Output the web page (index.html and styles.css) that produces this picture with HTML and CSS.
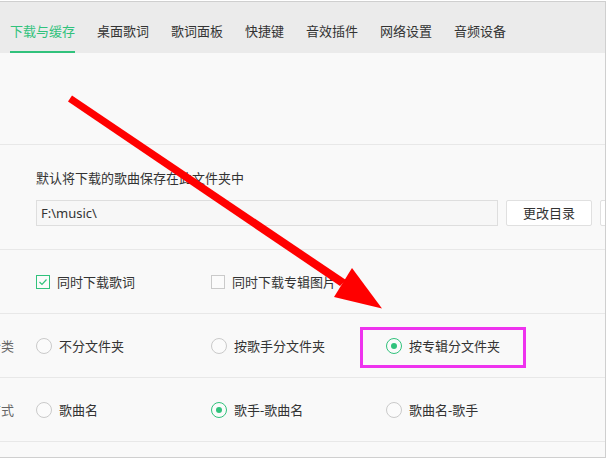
FILE: index.html
```html
<!DOCTYPE html>
<html>
<head>
<meta charset="utf-8">
<title>设置</title>
<link rel="stylesheet" href="styles.css">
</head>
<body>
<div class="window">
    <div class="tabs">
        <div class="tab active">下载与缓存</div>
        <div class="tab">桌面歌词</div>
        <div class="tab">歌词面板</div>
        <div class="tab">快捷键</div>
        <div class="tab">音效插件</div>
        <div class="tab">网络设置</div>
        <div class="tab">音频设备</div>
    </div>
    <div class="panel">
        <div class="section blank"></div>

        <div class="section dir">
            <div class="label"></div>
            <div class="dir-body">
                <div class="hint">默认将下载的歌曲保存在此文件夹中</div>
                <div class="dir-line">
                    <div class="path">F:\music\</div>
                    <div class="btn">更改目录</div>
                    <div class="btn">打开目录</div>
                </div>
            </div>
        </div>

        <div class="section row">
            <div class="label"></div>
            <div class="opt">
                <span class="check on">
                    <svg width="12" height="12" viewBox="0 0 12 12"><polyline points="2.5,6 5,8.5 9.5,3.5" fill="none" stroke="#31c27c" stroke-width="1.2"/></svg>
                </span>
                同时下载歌词
            </div>
            <div class="opt"><span class="check"></span>同时下载专辑图片</div>
        </div>

        <div class="section row">
            <div class="label"><span>文件智能分类</span></div>
            <div class="opt"><span class="radio"></span>不分文件夹</div>
            <div class="opt"><span class="radio"></span>按歌手分文件夹</div>
            <div class="opt"><span class="radio on"></span>按专辑分文件夹</div>
        </div>

        <div class="section row">
            <div class="label"><span>文件命名方式</span></div>
            <div class="opt"><span class="radio"></span>歌曲名</div>
            <div class="opt"><span class="radio on"></span>歌手-歌曲名</div>
            <div class="opt"><span class="radio"></span>歌曲名-歌手</div>
        </div>
    </div>
</div>

<svg class="annot" width="608" height="458" viewBox="0 0 608 458">
    <polygon points="72,95.6 68,101.4 340,286 346,280" fill="#ff0000"/>
    <polygon points="352,268 334,297 382,308.5" fill="#ff0000"/>
    <rect x="361.5" y="328.5" width="163" height="38" fill="none" stroke="#ee33ee" stroke-width="3"/>
</svg>
</body>
</html>
```

FILE: styles.css
```css
body {
    margin: 0;
    padding: 1px 2px 0 0;
    background: #fff;
    font-family: "Noto Sans", "Noto Sans CJK SC", sans-serif;
    font-size: 13px;
    color: #333;
}

.window {
    width: 605px;
    height: 455px;
    border-top: 1px solid #cfcfcf;
    border-right: 1px solid #cfcfcf;
    border-bottom: 1px solid #cfcfcf;
    background: #f9f9f9;
    overflow: hidden;
}

.tabs {
    display: flex;
    gap: 22px;
    height: 51px;
    padding-left: 10px;
    background: #ebebeb;
}

.tab {
    box-sizing: border-box;
    height: 51px;
    padding-top: 20px;
    line-height: 18px;
    white-space: nowrap;
    border-bottom: 2px solid transparent;
}

.tab.active {
    color: #31c27c;
    border-bottom-color: #31c27c;
}

.section {
    border-bottom: 1px solid #e8e8e8;
}

.blank {
    height: 91px;
}

.label {
    flex: none;
    display: flex;
    justify-content: flex-end;
    width: 14px;
    margin-right: 22px;
    overflow: hidden;
    white-space: nowrap;
    color: #666;
}

.dir {
    display: flex;
    height: 104px;
}

.dir-body {
    padding-top: 24px;
}

.hint {
    line-height: 18px;
    margin-bottom: 13px;
}

.dir-line {
    display: flex;
    gap: 8px;
}

.path {
    box-sizing: border-box;
    width: 462px;
    height: 26px;
    line-height: 24px;
    padding-left: 4px;
    border: 1px solid #dedede;
    background: #f7f7f7;
}

.btn {
    flex: none;
    box-sizing: border-box;
    width: 86px;
    height: 26px;
    line-height: 24px;
    text-align: center;
    background: #fff;
    border: 1px solid #e0e0e0;
    border-radius: 2px;
}

.row {
    display: flex;
    align-items: center;
    height: 63px;
}

.opt {
    display: flex;
    align-items: center;
    width: 175px;
    white-space: nowrap;
    line-height: 18px;
}

.radio {
    box-sizing: border-box;
    width: 16px;
    height: 16px;
    margin-right: 7px;
    border: 1px solid #cacaca;
    border-radius: 50%;
    background: #fbfbfb;
    display: flex;
    align-items: center;
    justify-content: center;
}

.radio.on {
    border-color: #31c27c;
}

.radio.on::after {
    content: "";
    width: 6px;
    height: 6px;
    border-radius: 50%;
    background: #31c27c;
}

.check {
    box-sizing: border-box;
    width: 14px;
    height: 14px;
    margin-right: 7px;
    border: 1px solid #cacaca;
    background: #fbfbfb;
    display: flex;
    align-items: center;
    justify-content: center;
}

.check.on {
    border-color: #31c27c;
}

.annot {
    position: absolute;
    top: 0;
    left: 0;
    pointer-events: none;
}
```
